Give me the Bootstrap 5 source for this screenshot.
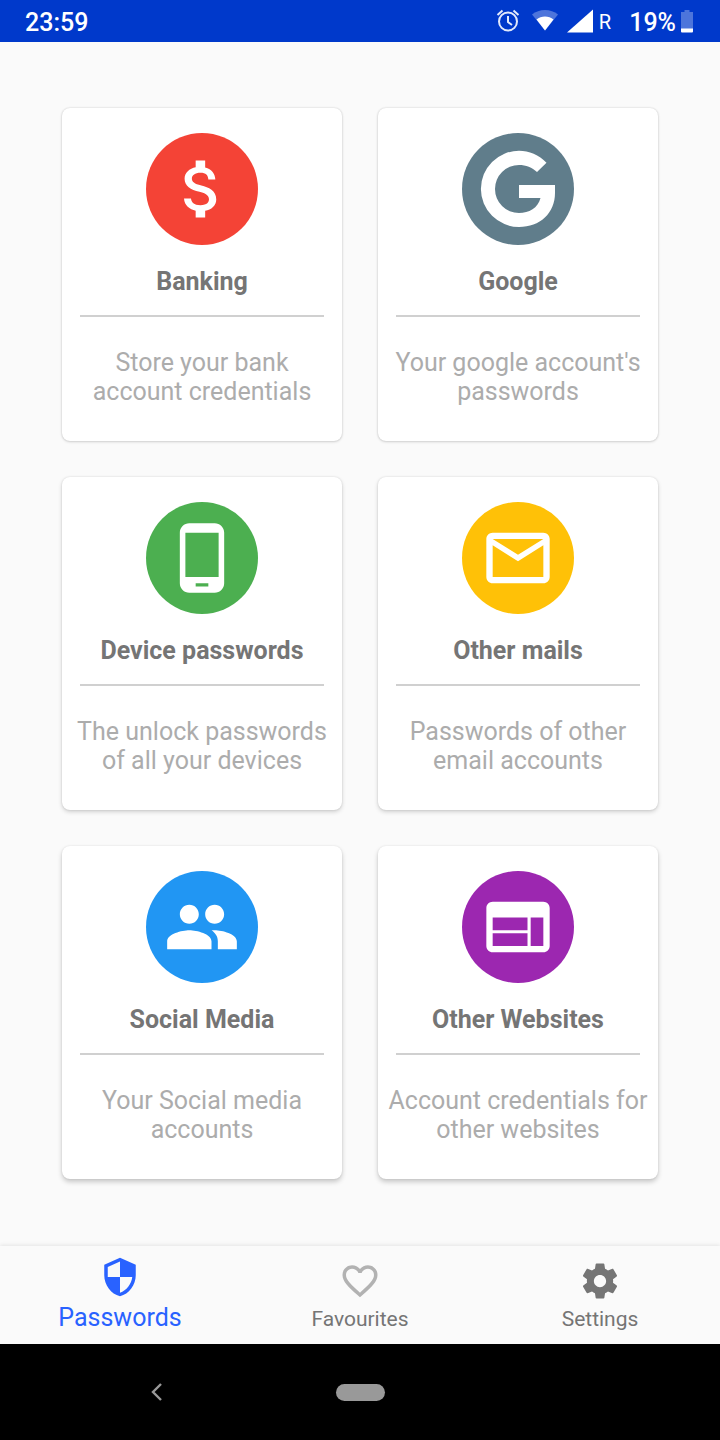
<!DOCTYPE html>
<html lang="en">
<head>
<meta charset="utf-8">
<meta name="viewport" content="width=device-width, initial-scale=1">
<title>Passwords</title>
<link href="https://cdn.jsdelivr.net/npm/bootstrap@5.3.0/dist/css/bootstrap.min.css" rel="stylesheet">
<style>
  body { font-family: Roboto, "Liberation Sans", sans-serif; font-size: 25px; line-height: 29px; background: #fafafa; color: #757575; }
  .status-bar { background: #0039cb; height: 42px; padding: 2px 26px 0 25px; font-weight: 500; }
  .status-icons { padding-bottom: 2px; }
  .roaming { font-size: 20px; font-weight: 400; margin: 0 18px 0 6px; }
  .vault { padding: 66px 62px; }
  .vault .row { --bs-gutter-x: 36px; --bs-gutter-y: 36px; }
  .tile { --bs-card-border-width: 0; --bs-card-border-radius: 8px; --bs-card-bg: #fff; color: inherit; padding: 25px 9px 35px; box-shadow: 0 0 2px rgba(0,0,0,.16), 0 1px 3px rgba(0,0,0,.14); }
  .tile-mid { box-shadow: 0 0 2px rgba(0,0,0,.12), 0 2px 4px rgba(0,0,0,.17); }
  .tile-low { box-shadow: 0 0 2px rgba(0,0,0,.1), 0 3px 5px rgba(0,0,0,.2); }
  .disc { width: 112px; height: 112px; }
  .tile h2 { font-size: 25px; line-height: 29px; font-weight: 700; margin: 22px 0 19px; }
  .tile hr { align-self: stretch; margin: 0 9px 31px; border-top: 2px solid #d0d0d0; opacity: 1; }
  .tile p { color: #acacac; }
  .tabs { background: #fafafa; height: 98px; box-shadow: 0 -1px 4px rgba(0,0,0,.09); padding-bottom: 12px; }
  .tabs a { color: #757575; font-size: 21px; line-height: 25px; gap: 5px; }
  .tabs a.active { color: #2962ff; font-size: 25px; line-height: 29px; }
  .sys-bar { height: 96px; }
  .sys-bar button { height: 48px; }
  .back-slot { padding-left: 12px; }
  .pill { width: 49px; height: 17px; background: #999; }
</style>
</head>
<body class="d-flex flex-column min-vh-100">
<header class="status-bar d-flex align-items-center justify-content-between text-white">
  <span>23:59</span>
  <div class="d-flex align-items-center">
    <div class="status-icons d-flex align-items-center gap-2">
      <svg width="28" height="24" viewBox="0 0 28 24" fill="none" stroke="#e2e9fb" stroke-width="2" aria-label="Alarm"><circle cx="13" cy="12.500" r="9"/><path d="M13 7v6l4 3M2.500 6l5-4.500M23.500 6l-5-4.500"/></svg>
      <svg width="28" height="24" viewBox="0 0 28 24" aria-label="Wi-Fi"><path d="M1 5.500C8-.5 20-.5 27 5.500L14 21.500Z" fill="#4d75db"/><path d="M5.500 10.500C10 6.500 18 6.500 22.500 10.500L14 21.500Z" fill="#fff"/></svg>
      <svg width="26" height="24" viewBox="0 0 26 24" aria-label="Signal"><path d="M0 23.500L26 .5V23.500Z" fill="#fff"/></svg>
    </div>
    <span class="roaming">R</span>
    <span>19%</span>
    <svg class="ms-1 status-icons" width="14" height="26" viewBox="0 0 14 24" aria-label="Battery"><path d="M1 3H4.500V1H9.500V3H13V20H1Z" fill="#4d75db"/><path d="M1 19.500H13V22.500a1 1 0 0 1-1 1H2a1 1 0 0 1-1-1Z" fill="#fff"/></svg>
  </div>
</header>

<main class="vault flex-grow-1">
  <div class="row row-cols-2 mt-0">
    <div class="col mt-0"><a href="#" class="card tile h-100 align-items-center text-center text-decoration-none">
      <svg class="disc" viewBox="0 0 112 112"><circle cx="56" cy="56" r="56" fill="#f44336"/><path transform="translate(18 18) scale(3.167)" fill="#fff" d="M11.800 10.900c-2.270-.59-3-1.200-3-2.150 0-1.090 1.010-1.850 2.700-1.850 1.780 0 2.440.85 2.500 2.100h2.210c-.07-1.720-1.120-3.300-3.210-3.810V3h-3v2.160c-1.940.42-3.500 1.680-3.500 3.610 0 2.310 1.910 3.460 4.700 4.130 2.500.6 3 1.480 3 2.410 0 .69-.49 1.790-2.700 1.790-2.060 0-2.870-.92-2.980-2.100h-2.200c.12 2.190 1.760 3.420 3.680 3.830V21h3v-2.150c1.950-.37 3.500-1.500 3.500-3.550 0-2.840-2.430-3.810-4.700-4.400z"/></svg>
      <h2>Banking</h2><hr><p class="mb-0">Store your bank account credentials</p></a></div>
    <div class="col mt-0"><a href="#" class="card tile h-100 align-items-center text-center text-decoration-none">
      <svg class="disc" viewBox="0 0 112 112"><circle cx="56" cy="56" r="56" fill="#607d8b"/><path fill="#fff" d="M84.500 29.700C77 22 67 17.800 57 17.800A38 38 0 0 0 57 94C78 94 93 80 93 60V52H57V65H78.500C76 75 67 80 57 80A24 24 0 0 1 57 32C64 32 70 34.500 75 39Z"/></svg>
      <h2>Google</h2><hr><p class="mb-0">Your google account's passwords</p></a></div>
    <div class="col"><a href="#" class="card tile tile-mid h-100 align-items-center text-center text-decoration-none">
      <svg class="disc" viewBox="0 0 112 112"><circle cx="56" cy="56" r="56" fill="#4caf50"/><path transform="translate(18 18) scale(3.167)" fill="#fff" d="M16 1H8C6.340 1 5 2.340 5 4v16c0 1.660 1.340 3 3 3h8c1.660 0 3-1.340 3-3V4c0-1.660-1.340-3-3-3zm-2 20h-4v-1h4v1zm3.250-3H6.750V4h10.500v14z"/></svg>
      <h2>Device passwords</h2><hr><p class="mb-0">The unlock passwords of all your devices</p></a></div>
    <div class="col"><a href="#" class="card tile tile-mid h-100 align-items-center text-center text-decoration-none">
      <svg class="disc" viewBox="0 0 112 112"><circle cx="56" cy="56" r="56" fill="#ffc107"/><path transform="translate(18 18) scale(3.167)" fill="#fff" d="M20 4H4c-1.100 0-2 .9-2 2v12c0 1.100.9 2 2 2h16c1.100 0 2-.9 2-2V6c0-1.100-.9-2-2-2zm0 14H4V8l8 5 8-5v10zm-8-7L4 6h16l-8 5z"/></svg>
      <h2>Other mails</h2><hr><p class="mb-0">Passwords of other email accounts</p></a></div>
    <div class="col"><a href="#" class="card tile tile-low h-100 align-items-center text-center text-decoration-none">
      <svg class="disc" viewBox="0 0 112 112"><circle cx="56" cy="56" r="56" fill="#2196f3"/><path transform="translate(18 18) scale(3.167)" fill="#fff" d="M16 11c1.660 0 2.990-1.340 2.990-3S17.660 5 16 5s-3 1.340-3 3 1.340 3 3 3zm-8 0c1.660 0 2.990-1.340 2.990-3S9.660 5 8 5 5 6.340 5 8s1.340 3 3 3zm0 2c-2.330 0-7 1.170-7 3.500V19h14v-2.500c0-2.330-4.670-3.500-7-3.500zm8 0c-.29 0-.62.020-.97.050 1.160.84 1.970 1.970 1.970 3.450V19h6v-2.500c0-2.330-4.670-3.500-7-3.500z"/></svg>
      <h2>Social Media</h2><hr><p class="mb-0">Your Social media accounts</p></a></div>
    <div class="col"><a href="#" class="card tile tile-low h-100 align-items-center text-center text-decoration-none">
      <svg class="disc" viewBox="0 0 112 112"><circle cx="56" cy="56" r="56" fill="#9c27b0"/><path transform="translate(18 18) scale(3.167)" fill="#fff" d="M20 4H4c-1.100 0-1.990.9-1.990 2L2 18c0 1.100.9 2 2 2h16c1.100 0 2-.9 2-2V6c0-1.100-.9-2-2-2zm-5 14H4v-4h11v4zm0-5H4V9h11v4zm5 5h-4V9h4v9z"/></svg>
      <h2>Other Websites</h2><hr><p class="mb-0">Account credentials for other websites</p></a></div>
  </div>
</main>

<nav class="tabs d-flex align-items-end">
  <a href="#" class="active d-flex flex-column align-items-center text-decoration-none flex-fill w-100" aria-current="page">
    <svg width="42" height="42" viewBox="0 0 24 24" fill="currentColor"><path d="M12 1L3 5v6c0 5.550 3.840 10.740 9 12 5.160-1.260 9-6.450 9-12V5l-9-4zm0 10.990h7c-.53 4.120-3.280 7.790-7 8.940V12H5V6.300l7-3.110v8.800z"/></svg>
    Passwords</a>
  <a href="#" class="d-flex flex-column align-items-center text-decoration-none flex-fill w-100">
    <svg width="42" height="42" viewBox="0 0 24 24" fill="#b2b2b2"><path d="M16.500 3c-1.740 0-3.410.81-4.500 2.090C10.910 3.810 9.240 3 7.500 3 4.420 3 2 5.420 2 8.500c0 3.780 3.400 6.860 8.550 11.540L12 21.350l1.450-1.320C18.600 15.360 22 12.280 22 8.500 22 5.420 19.580 3 16.500 3zm-4.400 15.550l-.1.100-.1-.1C7.140 14.240 4 11.390 4 8.500 4 6.500 5.500 5 7.500 5c1.540 0 3.040.99 3.570 2.360h1.870C13.460 5.990 14.960 5 16.500 5c2 0 3.500 1.500 3.500 3.500 0 2.890-3.140 5.740-7.900 10.050z"/></svg>
    Favourites</a>
  <a href="#" class="d-flex flex-column align-items-center text-decoration-none flex-fill w-100">
    <svg width="42" height="42" viewBox="0 0 24 24" fill="currentColor"><path d="M19.430 12.980c.04-.32.070-.64.070-.98s-.03-.66-.07-.98l2.110-1.650c.19-.15.24-.42.120-.64l-2-3.460c-.12-.22-.39-.3-.61-.22l-2.490 1c-.52-.4-1.080-.73-1.690-.98l-.38-2.650C14.460 2.180 14.250 2 14 2h-4c-.25 0-.46.18-.49.42l-.38 2.650c-.61.25-1.170.59-1.690.98l-2.490-1c-.23-.09-.49 0-.61.22l-2 3.460c-.13.22-.07.49.120.64l2.110 1.650c-.04.32-.07.65-.07.98s.03.66.070.98l-2.110 1.650c-.19.15-.24.42-.12.64l2 3.460c.12.22.39.3.61.22l2.490-1c.52.4 1.080.73 1.690.98l.38 2.650c.03.24.24.42.49.42h4c.25 0 .46-.18.49-.42l.38-2.650c.61-.25 1.170-.59 1.690-.98l2.490 1c.23.090.49 0 .61-.22l2-3.460c.12-.22.070-.49-.12-.64l-2.110-1.650zM12 15.500c-1.930 0-3.500-1.570-3.500-3.500s1.570-3.500 3.500-3.500 3.500 1.570 3.500 3.500-1.570 3.500-3.500 3.500z"/></svg>
    Settings</a>
</nav>

<footer class="sys-bar bg-black d-flex align-items-center">
  <div class="row g-0 w-100">
    <div class="col-5 back-slot d-flex justify-content-center"><button type="button" class="btn border-0 p-0 d-flex align-items-center" aria-label="Back"><svg width="12" height="18" viewBox="0 0 12 18" fill="none" stroke="#999" stroke-width="2.400"><path d="M11 1L3 9l8 8"/></svg></button></div>
    <div class="col-2 d-flex justify-content-center"><button type="button" class="btn border-0 p-0 d-flex align-items-center" aria-label="Home"><span class="pill rounded-pill"></span></button></div>
  </div>
</footer>
<script src="https://cdn.jsdelivr.net/npm/bootstrap@5.3.0/dist/js/bootstrap.bundle.min.js"></script>
</body>
</html>
